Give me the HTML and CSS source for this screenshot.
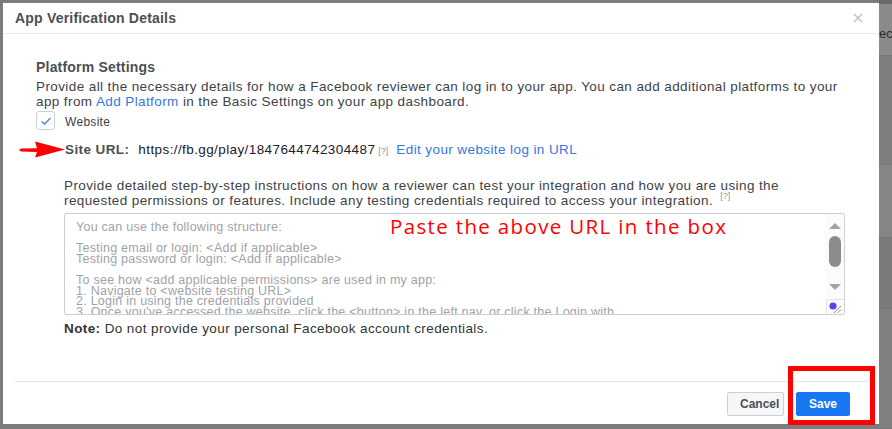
FILE: index.html
```html
<!DOCTYPE html>
<html lang="en">
<head>
    <meta charset="UTF-8" />
    <title>App Verification Details</title>
    <link rel="stylesheet" href="styles.css">
</head>
<body>
    <div class="screen">
        <div class="stage">
            <div class="dialog">
                <div class="dialog-header">
                    <span class="dialog-title">App Verification Details</span>
                    <svg class="close" width="10" height="10" viewBox="0 0 10 10">
                        <path d="M1 1 L9 9 M9 1 L1 9" stroke="#bec3c9" stroke-width="1.6" />
                    </svg>
                </div>

                <div class="dialog-body">
                    <h3 class="section-title">Platform Settings</h3>
                    <p class="section-text">
                        Provide all the necessary details for how a Facebook reviewer can log in to your app. You can add additional platforms to your<br>
                        app from <a href="#">Add Platform</a> in the Basic Settings on your app dashboard.
                    </p>

                    <div class="platform-row">
                        <span class="checkbox">
                            <svg width="12" height="10" viewBox="0 0 12 10">
                                <path d="M1.5 5.5 L4.5 8 L10.5 2" fill="none" stroke="#4a86e8" stroke-width="1.4" />
                            </svg>
                        </span>
                        <span class="platform-name">Website</span>
                    </div>

                    <div class="site-row">
                        <!-- annotation arrow -->
                        <svg class="arrow" width="48" height="18" viewBox="0 0 48 18">
                            <polygon points="0,9 2,7.5 18,7.2 16,0.5 46,8.5 16,16.5 18,11 2,10.5" fill="#f00" />
                        </svg>
                        <span class="site-label">Site URL:</span>
                        <span class="site-url">https://fb.gg/play/1847644742304487</span>
                        <sup class="hint">[?]</sup>
                        <a class="site-edit" href="#">Edit your website log in URL</a>
                    </div>

                    <p class="instructions">
                        Provide detailed step-by-step instructions on how a reviewer can test your integration and how you are using the<br>
                        requested permissions or features. Include any testing credentials required to access your integration. <sup class="hint">[?]</sup>
                    </p>

                    <div class="steps-box">
                        <div class="steps-text">You can use the following structure:

Testing email or login: &lt;Add if applicable&gt;
Testing password or login: &lt;Add if applicable&gt;

To see how &lt;add applicable permissions&gt; are used in my app:
1. Navigate to &lt;website testing URL&gt;
2. Login in using the credentials provided
3. Once you've accessed the website, click the &lt;button&gt; in the left nav, or click the Login with</div>
                        <div class="scrollbar">
                            <span class="sb-up"></span>
                            <span class="sb-thumb"></span>
                            <span class="sb-down"></span>
                            <span class="sb-corner">
                                <svg width="14" height="13" viewBox="0 0 14 13">
                                    <circle cx="5" cy="5" r="3.6" fill="#6a3cf0" />
                                    <path d="M6 12 L13 5 M9.5 12 L13 8.5" stroke="#888" stroke-width="0.9" />
                                </svg>
                            </span>
                        </div>
                        <span class="annotation">Paste the above URL in the box</span>
                    </div>

                    <p class="note"><b>Note:</b> Do not provide your personal Facebook account credentials.</p>
                </div>

                <div class="dialog-footer">
                    <button class="btn btn-cancel">Cancel</button>
                    <button class="btn btn-save">Save</button>
                </div>
            </div>
            <div class="highlight"></div>
        </div>

        <div class="backdrop-side">
            <div class="side-band band-a">ec</div>
            <div class="side-band band-b"></div>
            <div class="side-band band-c"></div>
            <div class="side-band band-d"></div>
            <div class="side-band band-e"></div>
        </div>
    </div>
</body>
</html>
```

FILE: styles.css
```css
body {
    margin: 0;
    font-family: "Liberation Sans", Arial, sans-serif;
    background-color: #7c7c7c;
    color: #3e4248;
}

.screen {
    display: flex;
    height: 429px;
    overflow: hidden;
}

.stage {
    position: relative;
    padding: 3px 0 0 3px;
}

.dialog {
    width: 876px;
    height: 421px;
    background-color: #fff;
    display: flex;
    flex-direction: column;
}

.dialog-header {
    height: 30px;
    border-bottom: 1px solid #e9eaed;
    display: flex;
    align-items: center;
    justify-content: space-between;
    padding: 0 16px 0 12px;
}

.dialog-title {
    font-size: 14px;
    font-weight: bold;
    letter-spacing: 0.2px;
    color: #4b4f56;
}

.dialog-body {
    padding: 25px 34px 0 33px;
}

.section-title {
    margin: 0;
    font-size: 14px;
    line-height: 16px;
    font-weight: bold;
    letter-spacing: 0.2px;
    color: #4b4f56;
}

.section-text {
    margin: 3.5px 0 0;
    font-size: 13.5px;
    line-height: 15px;
    letter-spacing: 0.4px;
    white-space: nowrap;
}

a {
    color: #3578e5;
    text-decoration: none;
}

.platform-row {
    display: flex;
    align-items: center;
    margin-top: 2.5px;
    height: 19px;
}

.checkbox {
    width: 17px;
    height: 17px;
    border: 1px solid #ccd0d5;
    border-radius: 3px;
    display: flex;
    align-items: center;
    justify-content: center;
}

.platform-name {
    margin-left: 10px;
    margin-top: 3px;
    font-size: 12px;
    letter-spacing: 0.3px;
}

.site-row {
    position: relative;
    display: flex;
    align-items: baseline;
    margin: 11px 0 0 29px;
    height: 18px;
    line-height: 18px;
    font-size: 13.5px;
    letter-spacing: 0.4px;
}

.arrow {
    position: absolute;
    left: -46px;
    top: 0;
}

.site-label {
    font-weight: bold;
    color: #4b4f56;
    margin-right: 9px;
}

.site-url {
    color: #1d2129;
}

.hint {
    font-size: 9px;
    line-height: 0;
    letter-spacing: 0;
    color: #90949c;
    margin-left: 3px;
}

.site-edit {
    margin-left: 8px;
}

.instructions {
    margin: 18.5px 0 0 28px;
    font-size: 13.5px;
    line-height: 15px;
    letter-spacing: 0.4px;
    white-space: nowrap;
}

.steps-box {
    position: relative;
    margin: 5.5px 0 0 28px;
    height: 100px;
    border: 1px solid #ccd0d5;
    border-radius: 2px;
    display: flex;
    overflow: hidden;
}

.steps-text {
    flex: 1;
    padding: 7.5px 11px 0;
    font-size: 12.5px;
    line-height: 10.7px;
    letter-spacing: 0.25px;
    color: #9fa2a8;
    white-space: pre;
    overflow: hidden;
}

.scrollbar {
    width: 19px;
    background-color: #fbfbfb;
    display: flex;
    flex-direction: column;
    align-items: center;
}

.sb-up,
.sb-down {
    width: 0;
    height: 0;
    border-left: 6px solid transparent;
    border-right: 6px solid transparent;
}

.sb-up {
    margin-top: 9px;
    border-bottom: 6px solid #a3a3a3;
}

.sb-down {
    margin-top: 17px;
    border-top: 6px solid #a3a3a3;
}

.sb-thumb {
    margin-top: 7px;
    width: 12px;
    height: 31px;
    border-radius: 6px;
    background-color: #8c8c8c;
}

.sb-corner {
    margin-top: auto;
    width: 17px;
    height: 14px;
    border-top: 1px solid #e3e3e3;
    border-left: 1px solid #e3e3e3;
    display: flex;
    align-items: center;
    justify-content: center;
}

/* red annotation over the text area */
.annotation {
    position: absolute;
    left: 325px;
    top: -2px;
    font-family: "Open Sans", sans-serif;
    font-size: 20.5px;
    letter-spacing: 1.35px;
    color: #f00;
}

.note {
    margin: 5.5px 0 0 28px;
    font-size: 13.5px;
    line-height: 15px;
    letter-spacing: 0.4px;
    color: #333;
}

.dialog-footer {
    margin: auto 12px 0;
    border-top: 1px solid #e5e5e5;
    padding: 10px 17px 8px 0;
    display: flex;
    justify-content: flex-end;
    gap: 12px;
}

.btn {
    height: 24px;
    padding: 0 12px;
    font-family: "Liberation Sans", Arial, sans-serif;
    font-size: 12px;
    font-weight: bold;
    border-radius: 2px;
    cursor: pointer;
}

.btn-cancel {
    width: 57px;
    background-color: #f5f6f7;
    border: 1px solid #ccd0d5;
    color: #4b4f56;
}

.btn-save {
    width: 54px;
    background-color: #1877f2;
    border: 1px solid #1877f2;
    color: #fff;
}

/* red box drawn round the Save button */
.highlight {
    position: absolute;
    left: 788px;
    top: 366px;
    width: 77px;
    height: 49px;
    border: 5px solid #f00;
}

.backdrop-side {
    flex: 1;
    display: flex;
    flex-direction: column;
}

.side-band {
    border-bottom: 1px solid #767676;
}

.band-a {
    height: 56px;
    padding-top: 22px;
    box-sizing: border-box;
    background-color: #8a8a8a;
    border-top: 4px solid #6a6a6a;
    font-size: 13px;
    color: #2a2a2a;
    white-space: nowrap;
    overflow: hidden;
}

.band-b {
    height: 108px;
    background-color: #7e7e7e;
}

.band-c {
    height: 72px;
    background-color: #858585;
}

.band-d {
    height: 70px;
    background-color: #7a7a7a;
}

.band-e {
    flex: 1;
    background-color: #808080;
}
```
